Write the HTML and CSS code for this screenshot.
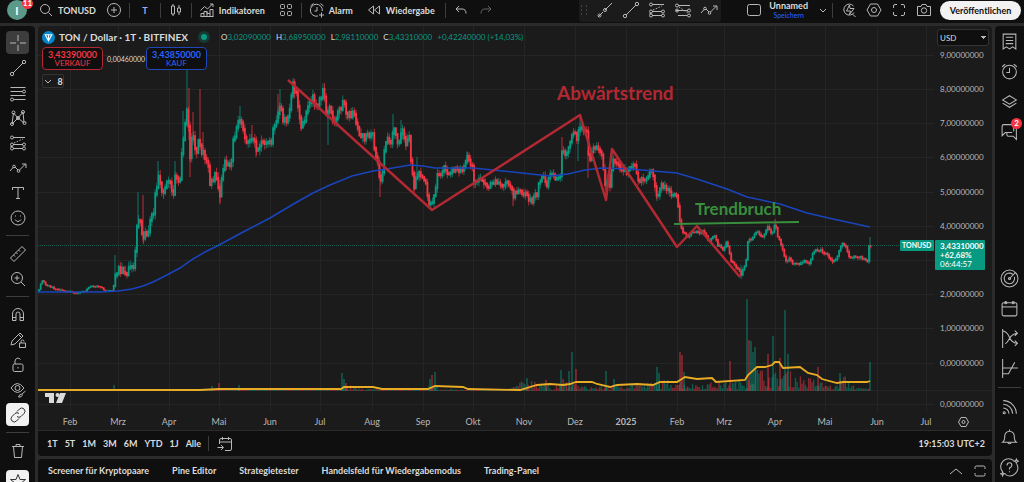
FILE: index.html
```html
<!DOCTYPE html>
<html lang="de">
  <head>
    <meta charset="utf-8">
    <title>TONUSD</title>
    <link rel="stylesheet" href="styles.css">
  </head>
  <body>
    <svg class="sprite">
      <symbol id="search" viewBox="0 0 18 18"><circle cx="8" cy="8" r="4.5"/><path d="M11.5 11.5L15 15"/></symbol>
      <symbol id="plus" viewBox="0 0 18 18"><circle cx="9" cy="9" r="6.5"/><path d="M9 6v6M6 9h6"/></symbol>
      <symbol id="candles" viewBox="0 0 18 18"><path d="M4.500 5h3v8h-3zM6 3v2M6 13v2M10.500 7h3v4h-3zM12 4v3M12 11v3"/></symbol>
      <symbol id="indicators" viewBox="0 0 18 18"><path d="M3 15.500v-3h3v3M6 12.500v-2h3v5M9 10.500v2h3v3M12 12.500v-4h3v7M2.500 15.500h13M2.500 9.500l4-4 3 2.500 5-5M12 3h3v3"/></symbol>
      <symbol id="tiles" viewBox="0 0 18 18"><rect x="3.500" y="3.500" width="4" height="4" rx="1"/><rect x="10.500" y="3.500" width="4" height="4" rx="1"/><rect x="3.500" y="10.500" width="4" height="4" rx="1"/><rect x="10.500" y="10.500" width="4" height="4" rx="1"/></symbol>
      <symbol id="alarm-add" viewBox="0 0 18 18"><path d="M14.300 10A6 6 0 1 0 10 15M9 6v4H6.500M2.500 5l3-2.500M12.500 2.500l3 2.500M13.500 11.500v5M11 14h5"/></symbol>
      <symbol id="rewind" viewBox="0 0 18 18"><path d="M8.500 5v8L3.500 9zM14.500 5v8l-5-4z"/></symbol>
      <symbol id="undo" viewBox="0 0 18 18"><path d="M7 5L4 8l3 3M4.500 8H10q4 0 4 4.500"/></symbol>
      <symbol id="redo" viewBox="0 0 18 18"><path d="M11 5l3 3-3 3M13.500 8H8q-4 0-4 4.500"/></symbol>
      <symbol id="drag" viewBox="4 0 9 18"><path d="M6 5h1M6 9h1M6 13h1M11 5h1M11 9h1M11 13h1"/></symbol>
      <symbol id="ray" viewBox="0 0 18 18"><path d="M2 16l5-5M9 9l7-7"/><circle cx="3.500" cy="14.500" r="1.500"/><circle cx="9" cy="9" r="1.500"/></symbol>
      <symbol id="trend" viewBox="0 0 18 18"><path d="M4 14L14 4"/><circle cx="3" cy="15" r="1.700"/><circle cx="15" cy="3" r="1.700"/></symbol>
      <symbol id="fib" viewBox="0 0 18 18"><path d="M1.500 3.500h15M1.500 7.500h12M1.500 11.500h15M4.500 15.500h12"/><circle cx="15" cy="7.500" r="1.500"/><circle cx="3" cy="15.500" r="1.500"/></symbol>
      <symbol id="pattern" viewBox="0 0 18 18"><path d="M3 15L4.500 4 9 9l5-6 1 11-6-5-6 6"/><circle cx="3" cy="15" r="1.500"/><circle cx="4.500" cy="3.500" r="1.500"/><circle cx="9" cy="9" r="1.500"/><circle cx="14" cy="3" r="1.500"/><circle cx="15.500" cy="14" r="1.500"/></symbol>
      <symbol id="forecast" viewBox="0 0 18 18"><path d="M4 3.500h12M4 10.500h10M4 14.500h10M1.500 12.500h2"/><path d="M5 9l9-4" stroke-dasharray="1.500 1.500"/><circle cx="3" cy="3.500" r="1.500"/><circle cx="3" cy="10.500" r="1.500"/><circle cx="3" cy="14.500" r="1.500"/><circle cx="15" cy="10.500" r="1.500"/><circle cx="15" cy="14.500" r="1.500"/></symbol>
      <symbol id="channel" viewBox="0 0 18 18"><path d="M4 4.500h12M2 9.500h12M4 14.500h9"/><path d="M5 6l9 6" stroke-dasharray="1.500 1.500"/><circle cx="3" cy="4.500" r="1.500"/><circle cx="3" cy="9.500" r="1.500"/><circle cx="15" cy="9.500" r="1.500"/><circle cx="15" cy="14.500" r="1.500"/></symbol>
      <symbol id="zigzag" viewBox="0 0 18 18"><path d="M1 12l3.500-4M6 8l3 3M10.500 11L16.500 5M13 5h4v4"/><circle cx="5" cy="7.500" r="1.300"/><circle cx="9.500" cy="12" r="1.300"/></symbol>
      <symbol id="square" viewBox="0 0 18 18"><rect x="2.500" y="3.500" width="13" height="11" rx="2"/></symbol>
      <symbol id="down" viewBox="0 0 18 18"><path d="M6 8l3 3 3-3"/></symbol>
      <symbol id="quick" viewBox="0 0 18 18"><path d="M13.500 5A5.500 5.500 0 1 0 14 11.500M12.500 13l3 3M9.500 4L6.500 10h4l-1 3.500 4.500-6h-4z"/></symbol>
      <symbol id="hex" viewBox="0 0 18 18"><path d="M5.500 3h7L16 9l-3.500 6h-7L2 9z"/><circle cx="9" cy="9" r="2.500"/></symbol>
      <symbol id="full" viewBox="0 0 18 18"><path d="M3.500 7V5q0-1.500 1.500-1.500h2M11 3.500h2q1.500 0 1.500 1.500v2M14.500 11v2q0 1.500-1.500 1.500h-2M7 14.500H5q-1.500 0-1.500-1.500v-2"/></symbol>
      <symbol id="camera" viewBox="0 0 18 18"><path d="M2.500 5.500h3.500l1-2h4l1 2h3.500v9h-13z"/><circle cx="9" cy="9.500" r="2.700"/></symbol>
      <symbol id="cross" viewBox="0 0 18 18"><path d="M9 1v6M9 11v6M1 9h6M11 9h6"/></symbol>
      <symbol id="text" viewBox="0 0 18 18"><path d="M3.500 6V3.500h11V6M9 3.500v11M7 14.500h4"/></symbol>
      <symbol id="smile" viewBox="0 0 18 18"><circle cx="9" cy="9" r="7"/><path d="M6 10.500q3 4 6 0M6.500 6.500v1M11.500 6.500v1"/></symbol>
      <symbol id="ruler" viewBox="0 0 18 18"><path d="M1.500 13L13 1.500 16.500 5 5 16.500zM4.500 10l1.500 1.500M7 7.500l1.500 1.500M9.500 5L11 6.500"/></symbol>
      <symbol id="zoom" viewBox="0 0 18 18"><circle cx="8" cy="8" r="5.500"/><path d="M12 12l4 4M8 5.500v5M5.500 8h5"/></symbol>
      <symbol id="magnet" viewBox="0 0 18 18"><path d="M3.500 14.500V8a5.500 5.500 0 0 1 11 0v6.500h-3.500V8a2 2 0 0 0-4 0v6.500zM3.500 11.500H7M11 11.500h3.500"/></symbol>
      <symbol id="pencil-lock" viewBox="0 0 18 18"><path d="M2 14l1-4L11 2l3 3-8 8zM9.500 3.500l3 3M10.500 12h6v4.500h-6zM12 12v-1.500a1.500 1.500 0 0 1 3 0"/></symbol>
      <symbol id="lock" viewBox="0 0 18 18"><rect x="4" y="8" width="10" height="7.500" rx="1.500"/><path d="M6 8V5a3 3 0 0 1 5.500-1.500M9 11v1.500"/></symbol>
      <symbol id="eye" viewBox="0 0 18 18"><path d="M2 7q6-9 13 0-6.500 9-13 0z"/><circle cx="8.500" cy="7" r="2.500"/><path d="M9.500 16q1-3 3-3l1 1q-1 2.500-4 2zM13 13l3.500-3"/></symbol>
      <symbol id="link" viewBox="0 0 18 18"><path d="M8 5.500l2.500-2.500a3 3 0 0 1 4.500 4.500L12 10.500a3 3 0 0 1-4 0M10 12.500L7.500 15A3 3 0 0 1 3 10.500L6 7.500a3 3 0 0 1 4 0"/></symbol>
      <symbol id="trash" viewBox="0 0 18 18"><path d="M3 4.500h12M7 4.500v-2h4v2M4.500 4.500l1 11h7l1-11"/></symbol>
      <symbol id="star" viewBox="0 0 18 18"><path d="M9 1.500l2 5h5.500l-4.500 3.500 2 5.500-5-3.500-5 3.500 2-5.500L1.500 6.500H7z"/></symbol>
      <symbol id="watch" viewBox="0 0 18 18"><path d="M3 2h12v14l-3-2-3 2-3-2-3 2zM5.500 5h7M5.500 8h7M5.500 11h7"/></symbol>
      <symbol id="alarm" viewBox="0 0 18 18"><circle cx="9" cy="9.500" r="6.500"/><path d="M9 5.500v4.500H6M2 4.500L5 2M13 2l3 2.500"/></symbol>
      <symbol id="layers" viewBox="0 0 18 18"><path d="M9 3.500l6.500 4L9 11.500 2.500 7.500zM2.500 10.500L9 14.500l6.500-4"/></symbol>
      <symbol id="chat" viewBox="0 0 18 18"><path d="M13 9V4q0-1.500-1.500-1.500h-8Q2 2.500 2 4v9l3-3h6.500M15.500 6.500v10l-3-3H8q-1.500 0-1.500-1.500v-2"/></symbol>
      <symbol id="target" viewBox="0 0 18 18"><circle cx="9" cy="9" r="8"/><path d="M12 5A5 5 0 1 0 13.700 7.500M9 9l5.500-5.500"/><circle cx="9" cy="9" r="1"/></symbol>
      <symbol id="calendar" viewBox="0 0 18 18"><rect x="2" y="3.500" width="14" height="12.500" rx="1.500"/><path d="M2 7.500h14"/><circle cx="5.500" cy="3.500" r="1"/><circle cx="12.500" cy="3.500" r="1"/></symbol>
      <symbol id="flow" viewBox="0 0 18 18"><path d="M2.500 0v18M3 2q4 1 6 6t7 5.500M5 14q2-1 4-5t7-5M14 1.500l2.500 2.500-2.500 2.500M14 11l2.500 2.500-2.500 2.500"/></symbol>
      <symbol id="payoff" viewBox="0 0 18 18"><path d="M2.500 0v18M2.500 8.500h14.500M2.500 14H8l6-11"/></symbol>
      <symbol id="feed" viewBox="0 0 18 18"><path d="M3 2.500A12.500 12.500 0 0 1 15.500 15M3 6A9 9 0 0 1 12 15M3 9.500A5.500 5.500 0 0 1 8.500 15"/><circle cx="4" cy="14" r="1"/></symbol>
      <symbol id="bell" viewBox="0 0 18 18"><path d="M2.500 13.500q2-1.500 2-6a4.500 4.500 0 0 1 9 0q0 4.500 2 6zM7.500 13.500a1.500 1.500 0 0 0 3 0M9 3V1.500"/></symbol>
      <symbol id="help" viewBox="0 0 18 18"><path d="M13 2.500A7.500 7.500 0 0 0 2 12.500M5 15.500A7.500 7.500 0 0 0 16 6M6.700 7q0-2.500 2.300-2.500T11.300 7Q11 8.500 9 9.500v1.500M9 12.500v1M15.500 1l.6 1.400 1.400.6-1.400.6-.6 1.400-.6-1.400-1.400-.6 1.400-.6zM2.500 13l.5 1.500 1.500.5-1.500.5-.5 1.500-.5-1.500L.5 15l1.500-.5z"/></symbol>
      <symbol id="goto" viewBox="0 0 18 18"><path d="M3.500 9V5Q3.500 3.500 5 3.500h9q1.500 0 1.500 1.500v9q0 1.500-1.500 1.500H9M3.500 7h12M6.500 2v3M12.500 2v3M1.500 12.500H7M5 10l2.500 2.500L5 15"/></symbol>
      <symbol id="up" viewBox="0 0 18 18"><path d="M3 12l6-5 6 5"/></symbol>
      <symbol id="maximize" viewBox="0 0 18 18"><path d="M4 7V5.500Q4 4 5.500 4h7Q14 4 14 5.500V7M4 11v1.500Q4 14 5.500 14h7q1.500 0 1.500-1.500V11"/></symbol>
    </svg>

    <header class="topbar">
      <button class="avatar" aria-label="Konto">I<span class="badge">11</span></button>
      <button class="tool symbol"><svg class="icon"><use href="#search"/></svg>TONUSD</button>
      <button class="tool add" aria-label="Symbol vergleichen"><svg class="icon"><use href="#plus"/></svg></button>
      <span class="divider"></span>
      <button class="tool interval">T</button>
      <span class="divider"></span>
      <button class="tool" aria-label="Kerzen"><svg class="icon"><use href="#candles"/></svg></button>
      <span class="divider"></span>
      <button class="tool indicators"><svg class="icon"><use href="#indicators"/></svg>Indikatoren</button>
      <button class="tool" aria-label="Vorlagen"><svg class="icon"><use href="#tiles"/></svg></button>
      <span class="divider"></span>
      <button class="tool alarm"><svg class="icon"><use href="#alarm-add"/></svg>Alarm</button>
      <button class="tool replay"><svg class="icon"><use href="#rewind"/></svg>Wiedergabe</button>
      <span class="divider"></span>
      <button class="tool" aria-label="Rückgängig"><svg class="icon"><use href="#undo"/></svg></button>
      <button class="tool redo dim" aria-label="Wiederholen"><svg class="icon"><use href="#redo"/></svg></button>

      <div class="favorites">
        <svg class="icon drag dim"><use href="#drag"/></svg>
        <button aria-label="Strahl"><svg class="icon"><use href="#ray"/></svg></button>
        <button aria-label="Trendlinie"><svg class="icon"><use href="#trend"/></svg></button>
        <button aria-label="Prognose"><svg class="icon"><use href="#forecast"/></svg></button>
        <button aria-label="Kanal"><svg class="icon"><use href="#channel"/></svg></button>
        <button aria-label="Pfad"><svg class="icon"><use href="#zigzag"/></svg></button>
      </div>
      <div class="layout">
        <button aria-label="Layout"><svg class="icon"><use href="#square"/></svg></button>
        <button class="layout-name">Unnamed<span class="save">Speichern</span></button>
        <button aria-label="Layouts verwalten"><svg class="icon"><use href="#down"/></svg></button>
      </div>
      <span class="divider"></span>
      <div class="actions">
        <button aria-label="Schnellsuche"><svg class="icon"><use href="#quick"/></svg></button>
        <button aria-label="Einstellungen"><svg class="icon"><use href="#hex"/></svg></button>
        <button aria-label="Vollbild"><svg class="icon"><use href="#full"/></svg></button>
        <button aria-label="Schnappschuss"><svg class="icon"><use href="#camera"/></svg></button>
      </div>
      <button class="publish">Veröffentlichen</button>
    </header>

    <div class="workspace">
      <nav class="drawing">
        <button class="active" aria-label="Fadenkreuz"><svg class="icon"><use href="#cross"/></svg></button>
        <button aria-label="Trendlinie"><svg class="icon"><use href="#trend"/></svg></button>
        <button aria-label="Fibonacci"><svg class="icon"><use href="#fib"/></svg></button>
        <button aria-label="Muster"><svg class="icon"><use href="#pattern"/></svg></button>
        <button aria-label="Prognose"><svg class="icon"><use href="#forecast"/></svg></button>
        <button aria-label="Pfad"><svg class="icon"><use href="#zigzag"/></svg></button>
        <button aria-label="Text"><svg class="icon"><use href="#text"/></svg></button>
        <button aria-label="Symbole"><svg class="icon"><use href="#smile"/></svg></button>
        <hr>
        <button aria-label="Messen"><svg class="icon"><use href="#ruler"/></svg></button>
        <button aria-label="Vergrößern"><svg class="icon"><use href="#zoom"/></svg></button>
        <hr>
        <button aria-label="Magnet"><svg class="icon"><use href="#magnet"/></svg></button>
        <button aria-label="Zeichenmodus"><svg class="icon"><use href="#pencil-lock"/></svg></button>
        <button aria-label="Sperren"><svg class="icon"><use href="#lock"/></svg></button>
        <button aria-label="Ausblenden"><svg class="icon"><use href="#eye"/></svg></button>
        <button class="on" aria-label="Synchronisieren"><svg class="icon"><use href="#link"/></svg></button>
        <hr>
        <button aria-label="Löschen"><svg class="icon"><use href="#trash"/></svg></button>
        <button class="on star" aria-label="Favoriten"><svg class="icon"><use href="#star"/></svg></button>
      </nav>

      <main class="center">
        <section class="chart-panel">
          <svg id="chart" class="chart" viewBox="38 26 954 404"></svg>
          <div class="legend">
            <div class="legend-title">
              <svg class="coin" viewBox="0 0 12 12"><circle cx="6" cy="6" r="6" fill="#0088cc"/><path d="M3 3.500h6L6 9zM6 3.500V9" fill="none" stroke="#fff"/></svg>
              <h1>TON / Dollar · 1T · BITFINEX</h1>
              <span class="live"></span>
              <p class="ohlc">
                <span>O<b>3,02090000</b></span>
                <span>H<b>3,68950000</b></span>
                <span>L<b>2,98110000</b></span>
                <span>C<b>3,43310000</b></span>
                <b>+0,42240000 (+14,03%)</b>
              </p>
            </div>
            <div class="orders">
              <button class="order sell"><strong>3,43390000</strong>VERKAUF</button>
              <span class="spread">0,00460000</span>
              <button class="order buy"><strong>3,43850000</strong>KAUF</button>
            </div>
            <button class="collapse"><svg class="icon"><use href="#down"/></svg>8</button>
          </div>
          <select class="currency" aria-label="Währung"><option>USD</option></select>
        </section>
        <div class="ranges">
          <button>1T</button>
          <button>5T</button>
          <button>1M</button>
          <button>3M</button>
          <button>6M</button>
          <button>YTD</button>
          <button>1J</button>
          <button>Alle</button>
          <span class="divider"></span>
          <button aria-label="Gehe zu"><svg class="icon"><use href="#goto"/></svg></button>
          <time class="clock">19:15:03 UTC+2</time>
        </div>
        <div class="tabs">
          <button>Screener für Kryptopaare</button>
          <button>Pine Editor</button>
          <button>Strategietester</button>
          <button>Handelsfeld für Wiedergabemodus</button>
          <button>Trading-Panel</button>
          <div class="tabs-end">
            <button aria-label="Öffnen"><svg class="icon"><use href="#up"/></svg></button>
            <button aria-label="Maximieren"><svg class="icon"><use href="#maximize"/></svg></button>
          </div>
        </div>
      </main>

      <nav class="widgets">
        <button aria-label="Watchlist"><svg class="icon"><use href="#watch"/></svg></button>
        <button aria-label="Alarme"><svg class="icon"><use href="#alarm"/></svg></button>
        <button aria-label="Objekte"><svg class="icon"><use href="#layers"/></svg></button>
        <button aria-label="Chats"><svg class="icon"><use href="#chat"/></svg><span class="badge">2</span></button>
        <button class="push" aria-label="Screener"><svg class="icon"><use href="#target"/></svg></button>
        <button aria-label="Kalender"><svg class="icon"><use href="#calendar"/></svg></button>
        <button aria-label="Optionen"><svg class="icon"><use href="#flow"/></svg></button>
        <button aria-label="Strategie"><svg class="icon"><use href="#payoff"/></svg></button>
        <hr>
        <button aria-label="Streams"><svg class="icon"><use href="#feed"/></svg></button>
        <button aria-label="Mitteilungen"><svg class="icon"><use href="#bell"/></svg></button>
        <button aria-label="Hilfe"><svg class="icon"><use href="#help"/></svg></button>
      </nav>
    </div>

    <script src="chart.js"></script>
  </body>
</html>
```

FILE: styles.css
```css
* {
  box-sizing: border-box;
}

body {
  margin: 0;
  height: 100vh;
  overflow: hidden;
  display: flex;
  flex-direction: column;
  gap: 3px;
  background: #2b2b2b;
  color: #dbdbdb;
  font-family: "Trebuchet MS", Lato, sans-serif;
  font-size: 9px;
}

button {
  display: flex;
  align-items: center;
  justify-content: center;
  flex-shrink: 0;
  padding: 0;
  border: none;
  background: none;
  color: inherit;
  font: inherit;
  font-weight: bold;
  white-space: nowrap;
  cursor: pointer;
}

.sprite {
  position: absolute;
  width: 0;
  height: 0;
}

.icon {
  width: 18px;
  height: 18px;
  flex-shrink: 0;
  fill: none;
  stroke: #b8b8b8;
  stroke-width: 1;
}

.dim {
  opacity: 0.5;
}

.divider {
  width: 1px;
  height: 15px;
  flex-shrink: 0;
  background: #3d3d3d;
}

.badge {
  position: absolute;
  top: 0;
  right: 0;
  width: 11px;
  height: 11px;
  border-radius: 6px;
  background: #f23645;
  color: #fff;
  font-size: 8px;
  line-height: 11px;
  text-align: center;
}

/* top toolbar */
.topbar {
  display: flex;
  align-items: center;
  height: 23px;
  flex-shrink: 0;
  padding: 0 3px 3px 7px;
  background: #0f0f0f;
}

.topbar .tool {
  margin: 0 6px;
  gap: 3px;
}

.topbar .avatar {
  position: relative;
  width: 20px;
  height: 20px;
  margin-right: 4px;
  border-radius: 10px;
  background: #5b9a8b;
  color: #fff;
  font-size: 11px;
}

.avatar .badge {
  top: -2px;
  right: -6px;
}

.topbar .add {
  margin-left: 3px;
}

.topbar .interval {
  width: 18px;
  color: #a5a8f0;
}

.topbar .indicators {
  margin-right: 6px;
}

.topbar .alarm {
  margin-right: 6px;
}

.topbar .replay {
  margin-right: 10px;
}

.topbar .redo {
  margin-left: 1px;
}

.favorites {
  display: flex;
  align-items: center;
  gap: 8px;
  height: 23px;
  margin: 0 24px 0 auto;
  padding: 0 3px 0 0;
  border-radius: 0 0 4px 4px;
  background: #1b1b1b;
}

.favorites .drag {
  width: 9px;
}

.layout {
  display: flex;
  align-items: center;
  gap: 6px;
}

.layout-name {
  flex-direction: column;
  line-height: 10px;
}

.save {
  color: #2962ff;
  font-size: 7px;
  font-weight: normal;
  line-height: 8px;
}

.actions {
  display: flex;
  gap: 7px;
  margin: 0 7px;
}

.publish {
  width: 81px;
  height: 19px;
  border-radius: 10px;
  background: #f2f2f2;
  color: #0f0f0f;
}

.workspace {
  display: flex;
  gap: 3px;
  flex: 1;
  min-height: 0;
}

/* side toolbars */
.drawing,
.widgets {
  display: flex;
  flex-direction: column;
  align-items: center;
  flex-shrink: 0;
  overflow: hidden;
  background: #0f0f0f;
}

.drawing {
  width: 35px;
  padding-top: 5px;
  border-radius: 0 4px 0 0;
}

.drawing button {
  width: 23px;
  height: 23px;
  margin-bottom: 2px;
  border-radius: 4px;
}

.drawing hr,
.widgets hr {
  width: 23px;
  height: 1px;
  flex-shrink: 0;
  margin: 4px 0 6px;
  border: none;
  background: #3d3d3d;
}

.drawing .active {
  background: #3d3d3d;
}

.drawing .on {
  background: #f2f2f2;
}

.drawing .on .icon {
  stroke: #333;
}

.drawing .star {
  margin-top: 6px;
}

.widgets {
  width: 29px;
  border-radius: 4px 0 0 0;
}

.widgets button {
  position: relative;
  width: 29px;
  height: 30px;
}

.widgets .push {
  margin-top: auto;
}

.widgets hr {
  margin: 4px 0;
}

.widgets .badge {
  top: 2px;
  right: 2px;
}

.widgets .icon {
  width: 19px;
  height: 19px;
}

/* chart */
.center {
  display: flex;
  flex-direction: column;
  flex: 1;
  min-width: 0;
}

.chart-panel {
  position: relative;
  flex: 1;
  min-height: 0;
  border-radius: 4px 4px 0 0;
  background: #1b1b1b;
}

.chart {
  display: block;
  width: 100%;
  height: 100%;
}

.chart text {
  fill: #b8b8b8;
  font-size: 8px;
}

.chart .month {
  font-size: 9px;
  text-anchor: middle;
}

.chart .year {
  font-weight: bold;
}

.chart .note {
  font-size: 19px;
  font-weight: bold;
}

.chart .down {
  fill: #b22833;
}

.chart .up {
  fill: #388e3c;
  font-size: 17px;
}

.chart .tag {
  fill: #fff;
  font-weight: bold;
}

.chart .ticker {
  font-size: 7px;
}

.chart .countdown {
  font-weight: normal;
}

.grid {
  stroke: #252525;
}

.legend {
  position: absolute;
  top: 4px;
  left: 4px;
}

.legend-title {
  display: flex;
  align-items: center;
  height: 14px;
}

.legend h1 {
  margin: 0 10px 0 4px;
  font-size: 10px;
  font-weight: bold;
}

.coin {
  width: 13px;
  height: 13px;
}

.live {
  width: 12px;
  height: 12px;
  border: 3px solid #163a34;
  border-radius: 6px;
  background: #089981;
}

.ohlc {
  display: flex;
  gap: 5px;
  margin: 0 0 0 11px;
  font-size: 8px;
}

.ohlc b {
  color: #089981;
  font-weight: normal;
}

.orders {
  display: flex;
  align-items: center;
  gap: 4px;
  margin-top: 3px;
}

.order {
  flex-direction: column;
  width: 61px;
  height: 23px;
  border: 1px solid;
  border-radius: 4px;
  background: #0f0f0f;
  font-size: 8px;
  font-weight: normal;
  line-height: 9px;
}

.order strong {
  font-size: 9px;
}

.sell {
  border-color: #b22833;
  color: #f23645;
}

.buy {
  border-color: #2148b8;
  color: #2962ff;
}

.spread {
  width: 35px;
  font-size: 7px;
  text-align: center;
}

.collapse {
  width: 22px;
  height: 14px;
  margin-top: 4px;
  padding-right: 4px;
  border: 1px solid #333;
  border-radius: 2px;
  font-size: 9px;
}

.currency {
  position: absolute;
  top: 3px;
  right: 3px;
  width: 52px;
  height: 17px;
  padding: 0 2px;
  appearance: none;
  border: 1px solid #333;
  border-radius: 3px;
  background:
    conic-gradient(from -45deg at 50% 100%, #b8b8b8 90deg, transparent 0) 43px 6px / 5px 3px no-repeat,
    #0f0f0f;
  color: #dbdbdb;
  font-family: inherit;
  font-size: 8px;
}

/* bottom bars */
.ranges {
  display: flex;
  align-items: center;
  gap: 7px;
  height: 26px;
  flex-shrink: 0;
  margin-bottom: 3px;
  padding: 0 7px 0 9px;
  border-top: 1px solid #2b2b2b;
  border-radius: 0 0 4px 4px;
  background: #0f0f0f;
}

.clock {
  margin-left: auto;
  font-weight: bold;
}

.tabs {
  display: flex;
  align-items: center;
  gap: 23px;
  height: 23px;
  flex-shrink: 0;
  padding: 0 3px 0 10px;
  border-radius: 4px 4px 0 0;
  background: #0f0f0f;
}

.tabs-end {
  display: flex;
  gap: 6px;
  margin-left: auto;
}
```

FILE: chart.js
```js
var svg = document.getElementById("chart");
var GREEN = "#089981";
var RED = "#f23645";

function add(name, attrs, text) {
  var el = document.createElementNS("http://www.w3.org/2000/svg", name);
  for (var key in attrs) el.setAttribute(key, attrs[key]);
  if (text) el.textContent = text;
  svg.appendChild(el);
}

function line(x1, y1, x2, y2, attrs) {
  add("line", Object.assign({ x1: x1, y1: y1, x2: x2, y2: y2 }, attrs));
}

// repeatable noise between -1 and 1
var seed = 7;
function noise() {
  seed = (seed * 16807) % 2147483647;
  return (seed / 2147483647) * 2 - 1;
}

// value of a flat [x, y, x, y, ...] list at x
function at(list, x) {
  for (var i = 2; i < list.length; i += 2) {
    if (x <= list[i]) {
      var t = (x - list[i - 2]) / (list[i] - list[i - 2]);
      return list[i - 1] + t * (list[i + 1] - list[i - 1]);
    }
  }
  return list[list.length - 1];
}

var months = [
  [70, "Feb"], [118, "Mrz"], [169, "Apr"], [219, "Mai"], [270, "Jun"], [320, "Jul"],
  [372, "Aug"], [423, "Sep"], [473, "Okt"], [524, "Nov"], [575, "Dez"], [626, "2025"],
  [677, "Feb"], [724, "Mrz"], [775, "Apr"], [825, "Mai"], [877, "Jun"], [926, "Jul"],
];
var prices = [
  [55, "9,00000000"], [89, "8,00000000"], [123, "7,00000000"], [157, "6,00000000"],
  [192, "5,00000000"], [226, "4,00000000"], [260, ""], [294, "2,00000000"],
  [328, "1,00000000"], [363, "0,00000000"], [404, "0,00000000"],
];

var closes = [
  38, 292, 41, 283, 43, 280, 46, 285, 51, 287, 58, 290, 66, 291, 76, 293, 86, 291, 89, 287, 99, 286,
  106, 291, 113, 290, 115, 278, 118, 270, 123, 271, 126, 274, 129, 267, 134, 268, 135, 252, 137, 223,
  139, 217, 142, 232, 144, 237, 148, 233, 151, 215, 154, 212, 155, 193, 159, 178, 163, 193, 166, 185,
  169, 178, 173, 195, 175, 177, 180, 179, 182, 147, 184, 133, 187, 110, 189, 132, 190, 155, 192, 132,
  196, 152, 199, 142, 201, 155, 204, 153, 208, 167, 210, 181, 215, 177, 218, 183, 220, 195, 223, 167,
  227, 162, 231, 169, 233, 143, 236, 128, 240, 122, 244, 132, 249, 147, 252, 135, 256, 147, 263, 143,
  268, 140, 271, 148, 273, 128, 276, 127, 278, 113, 280, 107, 283, 118, 287, 125, 290, 107, 293, 85,
  297, 97, 301, 125, 305, 118, 308, 108, 313, 98, 317, 107, 321, 97, 323, 87, 327, 118, 329, 103,
  333, 120, 338, 113, 343, 103, 348, 117, 353, 113, 357, 125, 361, 137, 366, 137, 372, 130, 375, 153,
  378, 162, 380, 182, 383, 173, 385, 142, 388, 135, 390, 150, 393, 128, 397, 140, 399, 142, 402, 125,
  406, 142, 409, 133, 411, 160, 414, 187, 417, 172, 420, 177, 426, 185, 429, 203, 433, 200, 435, 193,
  437, 173, 441, 173, 444, 165, 449, 175, 453, 168, 458, 172, 464, 167, 467, 158, 472, 165, 474, 182,
  480, 178, 487, 188, 493, 182, 500, 185, 507, 182, 512, 188, 513, 200, 518, 188, 525, 195, 532, 201,
  537, 194, 538, 185, 543, 177, 547, 185, 551, 170, 555, 178, 561, 177, 562, 150, 566, 153, 569, 145,
  573, 130, 577, 138, 580, 127, 587, 132, 589, 165, 593, 147, 599, 147, 602, 158, 604, 177, 606, 187,
  608, 172, 610, 185, 613, 162, 617, 165, 627, 173, 631, 165, 636, 168, 638, 183, 643, 178, 646, 182,
  649, 173, 653, 172, 657, 197, 661, 183, 665, 188, 670, 193, 677, 198, 680, 220, 682, 232, 687, 237,
  693, 232, 698, 233, 703, 232, 710, 242, 714, 233, 718, 245, 723, 250, 727, 242, 730, 257, 732, 263,
  737, 267, 741, 275, 746, 262, 747, 242, 752, 238, 757, 232, 763, 237, 768, 225, 772, 237, 775, 222,
  778, 237, 784, 253, 785, 263, 790, 257, 793, 265, 800, 263, 804, 260, 809, 263, 813, 253, 818, 249,
  827, 255, 833, 261, 837, 258, 842, 243, 846, 247, 849, 258, 857, 257, 862, 258, 868, 261, 870, 246,
];

// long wicks: x, top, bottom, colour
var wicks = [
  [115, 255, 280, GREEN], [138, 192, 220, GREEN], [143, 195, 242, RED], [158, 161, 182, GREEN],
  [175, 161, 185, GREEN], [183, 111, 150, GREEN], [187, 70, 120, GREEN], [189, 88, 140, RED],
  [190, 130, 177, RED], [193, 112, 145, RED], [200, 89, 150, RED], [203, 132, 155, RED],
  [220, 180, 204, RED], [240, 106, 125, GREEN], [252, 125, 140, RED], [256, 140, 157, RED],
  [278, 94, 115, RED], [280, 89, 110, GREEN], [293, 78, 95, GREEN], [301, 115, 131, RED],
  [328, 110, 145, GREEN], [380, 165, 197, RED], [393, 114, 135, GREEN], [401, 120, 140, GREEN],
  [414, 170, 191, RED], [417, 157, 175, GREEN], [467, 152, 165, GREEN], [513, 190, 206, RED],
  [562, 137, 170, RED], [578, 130, 161, GREEN], [580, 117, 130, GREEN], [588, 150, 178, RED],
  [606, 170, 200, RED], [613, 149, 170, GREEN], [657, 185, 201, GREEN], [741, 265, 279, GREEN],
  [775, 219, 230, RED], [870, 237, 262, GREEN],
];

var average = [
  38, 292, 100, 292, 118, 291, 132, 289, 143, 286, 153, 282, 165, 276, 180, 268, 193, 259, 205, 252,
  219, 245, 232, 238, 245, 231, 270, 218, 280, 212, 297, 202, 313, 193, 330, 185, 352, 176, 373, 171,
  387, 169, 410, 165, 423, 166, 435, 168, 473, 168, 513, 172, 540, 175, 550, 176, 568, 174, 585, 170,
  602, 168, 630, 169, 677, 173, 697, 179, 727, 189, 747, 197, 780, 204, 807, 213, 833, 219, 870, 227,
];

// usual height of the volume bars
var volume = [
  38, 1, 340, 1, 345, 6, 372, 2, 425, 1, 432, 9, 440, 2, 510, 1, 518, 8, 535, 12, 550, 5, 570, 9,
  580, 5, 600, 4, 620, 7, 650, 8, 675, 12, 690, 7, 710, 8, 744, 10, 755, 24, 770, 16, 785, 20,
  800, 15, 818, 10, 835, 4, 843, 16, 850, 9, 860, 3, 870, 3,
];
var spikes = [
  [114, 385, GREEN], [212, 386, GREEN], [219, 383, RED], [239, 385, GREEN], [342, 373, GREEN],
  [344, 379, GREEN], [346, 383, RED], [430, 379, GREEN], [432, 375, RED], [435, 372, GREEN],
  [527, 378, GREEN], [546, 380, RED], [561, 370, GREEN], [563, 379, RED], [569, 371, GREEN],
  [572, 352, GREEN], [576, 369, RED], [606, 371, GREEN], [614, 379, GREEN], [657, 367, GREEN],
  [659, 373, GREEN], [680, 352, RED], [682, 355, RED], [684, 372, GREEN], [730, 361, RED],
  [747, 299, GREEN], [749, 340, RED], [751, 341, GREEN], [753, 352, GREEN], [755, 347, GREEN],
  [768, 354, RED], [773, 336, GREEN], [780, 358, RED], [785, 310, GREEN], [788, 354, GREEN],
  [818, 367, RED], [840, 373, GREEN], [870, 362, GREEN],
];
var volumeAverage = [
  38, 390, 200, 390, 219, 389, 269, 389, 341, 389, 344, 387, 373, 387, 382, 389, 428, 389, 435, 386,
  463, 387, 468, 389, 520, 390, 537, 385, 550, 384, 563, 385, 570, 384, 576, 382, 592, 382, 597, 384,
  610, 387, 617, 385, 637, 384, 653, 385, 660, 382, 677, 382, 685, 377, 697, 379, 712, 378, 716, 382,
  745, 380, 748, 375, 757, 367, 765, 367, 772, 365, 775, 362, 779, 362, 783, 368, 800, 367, 808, 373,
  817, 375, 822, 379, 837, 383, 843, 382, 867, 382, 870, 381,
];

// grid and axes
months.forEach(function (m) {
  line(m[0] + 0.5, 26, m[0] + 0.5, 411, { class: "grid" });
  add("text", { x: m[0], y: 425, class: m[1] === "2025" ? "month year" : "month" }, m[1]);
});
prices.forEach(function (p) {
  line(38, p[0] + 0.5, 934, p[0] + 0.5, { class: "grid" });
  add("text", { x: 940, y: p[0] + 3 }, p[1]);
});
line(38, 390.5, 992, 390.5, { class: "grid" });

// volume
for (var x = 38.5; x < 870; x += 1.66) {
  var height = Math.max(1, at(volume, x) * (0.65 + 0.45 * noise()));
  line(x, 391, x, 391 - height, { stroke: noise() > 0 ? GREEN : RED, "stroke-opacity": 0.5, "stroke-width": 1.4 });
}
spikes.forEach(function (s) {
  line(s[0], 391, s[0], s[1], { stroke: s[2], "stroke-opacity": 0.55, "stroke-width": 1.5 });
});
add("polyline", { points: volumeAverage.join(" "), fill: "none", stroke: "#e8ab24", "stroke-width": 1.8 });

// candles
wicks.forEach(function (w) {
  line(w[0], w[1], w[0], w[2], { stroke: w[3], "stroke-opacity": 0.75 });
});
var previous = 292;
for (x = 39; x <= 871; x += 1.66) {
  var rough = x < 115 ? 1 : x < 420 ? 5 : x < 680 ? 4 : 2;
  var current = x > 868 ? 246 : at(closes, x) + noise() * rough * 0.7;
  var color = current < previous ? GREEN : RED;
  var high = Math.min(previous, current) - rough / 3;
  var low = Math.max(previous, current, high + 1) + rough / 3;
  line(x, high - Math.abs(noise()) * rough, x, low + Math.abs(noise()) * rough, { stroke: color, "stroke-opacity": 0.7 });
  line(x, high, x, low, { stroke: color, "stroke-width": 1.8 });
  previous = current;
}
add("polyline", { points: average.join(" "), fill: "none", stroke: "#1a44bd", "stroke-width": 1.5 });
line(38, 245.5, 934, 245.5, { stroke: GREEN, "stroke-dasharray": "1 1", "stroke-opacity": 0.5 });

// drawings
add("polyline", {
  points: "288,80 432,210 580,115 606,200 612,149 677,247 697,226 740,277",
  fill: "none", stroke: "#b22833", "stroke-width": 2.5, "stroke-linejoin": "round",
});
line(674, 224, 799, 222, { stroke: "#388e3c", "stroke-width": 2 });
add("text", { x: 557, y: 100, class: "note down" }, "Abwärtstrend");
add("text", { x: 695, y: 215, class: "note up" }, "Trendbruch");

// last price
add("rect", { x: 900, y: 240, width: 34, height: 11, rx: 1, fill: GREEN });
add("rect", { x: 935, y: 240, width: 50, height: 30, rx: 1, fill: GREEN });
add("text", { x: 902, y: 248, class: "tag ticker" }, "TONUSD");
add("text", { x: 940, y: 249, class: "tag" }, "3,43310000");
add("text", { x: 940, y: 258, class: "tag" }, "+62,68%");
add("text", { x: 940, y: 267, class: "tag countdown" }, "06:44:57");

// axis settings
add("path", { d: "M961 417.500h5l2.500 4.500-2.500 4.500h-5l-2.500-4.500z", fill: "none", stroke: "#b8b8b8" });
add("circle", { cx: 963.5, cy: 422, r: 1.5, fill: "none", stroke: "#b8b8b8" });

// logo
add("path", { d: "M45 393h9v10h-5v-6h-4zM60 393h6l-4 10h-6z", fill: "#dbdbdb" });
add("circle", { cx: 57.5, cy: 395, r: 2, fill: "#dbdbdb" });
```
